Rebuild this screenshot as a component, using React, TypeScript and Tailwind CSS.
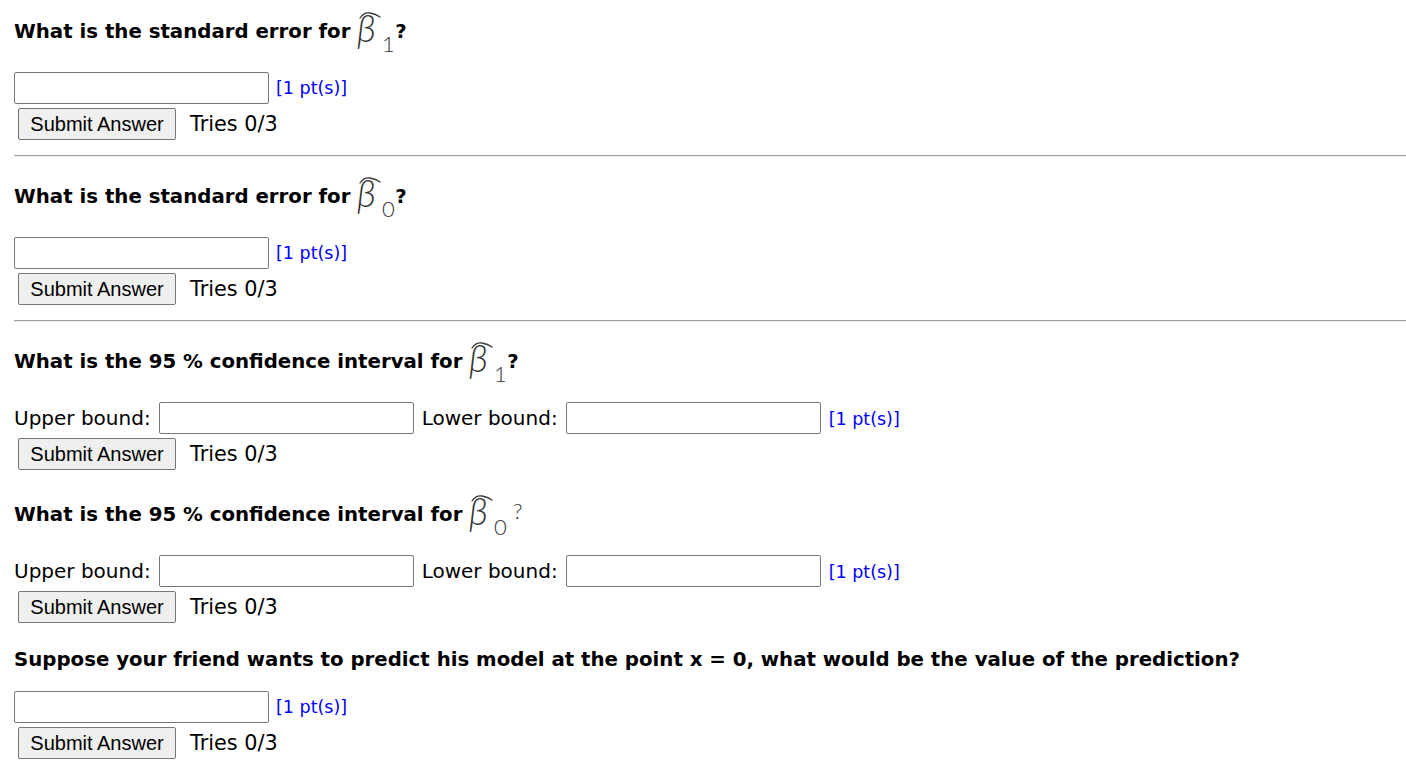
import React from 'react'

const verdana = { fontFamily: '"DejaVu Sans", Verdana, sans-serif' }
const thin = { fontFamily: 'Lato, "Open Sans", sans-serif' }

function BetaHat({ sub, mark }: { sub: string; mark?: boolean }) {
    // rendered-equation look: thin grey beta with a hat and a subscript
    const w = mark ? 58 : 38
    return (
        <svg
            width={w}
            height={40}
            viewBox={`0 0 ${w} 40`}
            overflow="visible"
            className="inline-block align-middle overflow-visible"
            aria-label={`beta hat ${sub}`}
        >
            <path d="M3 6 Q 7 0 13 1 Q 19 2 23 5" fill="none" stroke="#3a3a3a" strokeWidth="1.3" strokeLinecap="round" />
            <text x="0" y="30" fontSize="37" fontStyle="italic" fontWeight="300" fill="#333" style={thin}>
                β
            </text>
            <text x="25" y="40" fontSize="22" fontWeight="300" fill="#333" style={thin}>
                {sub}
            </text>
            {mark && (
                <text x="44" y="24" fontSize="22" fontWeight="300" fill="#333" style={thin}>
                    ?
                </text>
            )}
        </svg>
    )
}

function TextBox() {
    return <input type="text" className="w-[255px] h-[32px] border border-[#767676] rounded-[2px] bg-white px-1 text-[20px]" />
}

function Points() {
    return <span className="text-[17.5px] text-[#0000ff]">[1 pt(s)]</span>
}

function SubmitRow({ className = '' }: { className?: string }) {
    return (
        <div className={`flex items-center h-[32px] ${className}`}>
            <button
                className="ml-[4px] w-[158px] h-[32px] bg-[#efefef] border border-[#767676] rounded-[2px] text-[20px] leading-[30px] text-black"
                style={{ fontFamily: '"Liberation Sans", Arial, sans-serif' }}
            >
                Submit Answer
            </button>
            <span className="ml-[14px] leading-none text-[20.8px]">Tries 0/3</span>
        </div>
    )
}

function Rule() {
    return <div className="border-t border-t-[#a0a0a0] border-b border-b-[#eeeeee] h-0" />
}

function SingleQuestion({ children, top }: { children: React.ReactNode; top: string }) {
    return (
        <div>
            <h3 className={`font-bold text-[19.75px] leading-[23px] ${top}`}>{children}</h3>
            <div className="flex items-center gap-[7px] mt-[20px]">
                <TextBox />
                <Points />
            </div>
            <SubmitRow className="mt-[4px]" />
        </div>
    )
}

function IntervalQuestion({ children, top }: { children: React.ReactNode; top: string }) {
    return (
        <div>
            <h3 className={`font-bold text-[19.75px] leading-[23px] ${top}`}>{children}</h3>
            <div className="flex items-center mt-[20px] text-[20px]">
                <span>Upper bound:</span>
                <span className="ml-[8px]">
                    <TextBox />
                </span>
                <span className="ml-[8px]">Lower bound:</span>
                <span className="ml-[8px]">
                    <TextBox />
                </span>
                <span className="ml-[8px]">
                    <Points />
                </span>
            </div>
            <SubmitRow className="mt-[4px]" />
        </div>
    )
}

export default function App() {
    return (
        <div className="bg-white text-black pl-[14px] min-h-[777px]" style={verdana}>
            <SingleQuestion top="pt-[12px]">
                What is the standard error for <BetaHat sub="1" />?
            </SingleQuestion>
            <div className="mt-[15px]">
                <Rule />
            </div>

            <SingleQuestion top="pt-[20px]">
                What is the standard error for <BetaHat sub="0" />?
            </SingleQuestion>
            <div className="mt-[15px]">
                <Rule />
            </div>

            <IntervalQuestion top="pt-[20px]">
                What is the 95 % confidence interval for <BetaHat sub="1" />?
            </IntervalQuestion>

            <IntervalQuestion top="pt-[25px]">
                What is the 95 % confidence interval for <BetaHat sub="0" mark />
            </IntervalQuestion>

            <SingleQuestion top="pt-[25px]">
                Suppose your friend wants to predict his model at the point x = 0, what would be the value of the
                prediction?
            </SingleQuestion>
        </div>
    )
}
